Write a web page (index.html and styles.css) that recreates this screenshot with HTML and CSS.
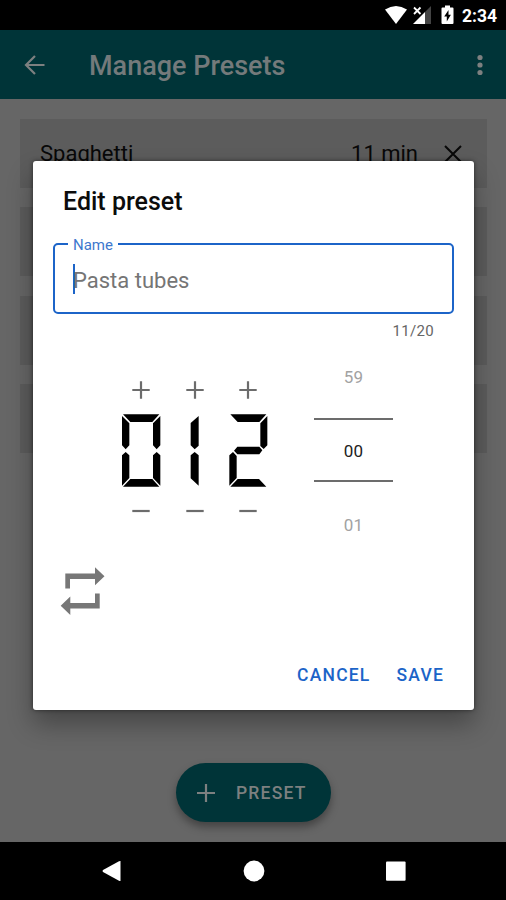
FILE: index.html
```html
<!DOCTYPE html>
<html lang="en">
<head>
<meta charset="utf-8">
<title>Manage Presets</title>
<link rel="stylesheet" href="styles.css">
</head>
<body>
<div class="phone">
  <div class="status-bar">
    <svg class="wifi" width="24" height="20" viewBox="0 0 24 20"><path d="M1 4.500Q12-2.500 23 4.500L12 19Z" fill="#fff"/></svg>
    <svg class="signal" width="19" height="20" viewBox="0 0 19 20"><path d="M18 1V19H12V7Z" fill="#444"/><path d="M12 7V19H0Z" fill="#fff"/><path d="M1 2.500L7.500 9M7.500 2.500L1 9" stroke="#fff" stroke-width="1.800"/></svg>
    <svg class="battery" width="13" height="20" viewBox="0 0 13 20"><path d="M4 .5H9V2.500H11.500Q12.500 2.500 12.500 3.500V18Q12.500 19 11.500 19H1.500Q.5 19 .5 18V3.500Q.5 2.500 1.500 2.500H4Z" fill="#fff"/><path d="M7.500 5L3.200 11.500H5.800V16.500L9.900 9.800H7.500Z" fill="#000"/></svg>
    <span class="clock">2:34</span>
  </div>
  <header class="app-bar">
    <svg class="back" width="22" height="22" viewBox="0 0 22 22"><path d="M20.500 11H2.500M11 2L2 11L11 20" fill="none" stroke="#7d8080" stroke-width="2.200"/></svg>
    <h1>Manage Presets</h1>
    <svg width="6" height="22" viewBox="0 0 6 22" fill="#7d8080"><circle cx="3" cy="3.500" r="2.600"/><circle cx="3" cy="11" r="2.600"/><circle cx="3" cy="18.500" r="2.600"/></svg>
  </header>
  <main class="content">
    <ul class="presets">
      <li><span class="preset-name">Spaghetti</span><span>11 min</span><svg width="18" height="18" viewBox="0 0 18 18"><path d="M1 1L17 17M17 1L1 17" stroke="#080808" stroke-width="2"/></svg></li>
      <li></li>
      <li></li>
      <li></li>
    </ul>
    <button class="add"><svg width="18" height="18" viewBox="0 0 18 18"><path d="M9 0V18M0 9H18" stroke="#7d8080" stroke-width="2.200"/></svg><span>PRESET</span></button>
  </main>
  <nav class="nav-bar">
    <svg width="22" height="22" viewBox="0 0 22 22"><path d="M19.500 1V21Q19 21.200 18 20.700L2 12Q1 11 2 10L18 1.300Q19 .8 19.500 1Z" fill="#fff"/></svg>
    <svg width="22" height="22" viewBox="0 0 22 22"><circle cx="11" cy="11" r="10.400" fill="#fff"/></svg>
    <svg width="22" height="22" viewBox="0 0 22 22"><rect x="1" y="1.400" width="19.600" height="19.300" rx="1" fill="#fff"/></svg>
  </nav>

  <section class="dialog">
    <h2>Edit preset</h2>
    <div class="field">
      <label>Name</label>
      <span class="caret"></span><span class="value">Pasta tubes</span>
    </div>
    <div class="counter">11/20</div>
    <div class="pickers">
      <div class="digits">
        <div class="digit">
          <svg class="sign" width="18" height="18" viewBox="0 0 18 18"><path d="M9 .3V17.700M.3 9H17.700"/></svg>
          <svg width="40" height="74" viewBox="64 159 120 222"><path d="M70 163H179L158 186H92ZM67 168L89 190V256L78 268L67 256ZM182 168L160 190V256L171 268L182 256ZM67 377V286L78 276L89 286V354ZM182 377V286L171 276L160 286V354ZM70 380L92 357H158L179 380Z"/></svg>
          <svg class="sign" width="18" height="18" viewBox="0 0 18 18"><path d="M.3 9H17.700"/></svg>
        </div>
        <div class="digit">
          <svg class="sign" width="18" height="18" viewBox="0 0 18 18"><path d="M9 .3V17.700M.3 9H17.700"/></svg>
          <svg width="40" height="74" viewBox="224 159 120 222"><path d="M295 168L271 189V256L283 268L295 257ZM283 276L295 286V377L271 355V286Z"/></svg>
          <svg class="sign" width="18" height="18" viewBox="0 0 18 18"><path d="M.3 9H17.700"/></svg>
        </div>
        <div class="digit">
          <svg class="sign" width="18" height="18" viewBox="0 0 18 18"><path d="M9 .3V17.700M.3 9H17.700"/></svg>
          <svg width="40" height="74" viewBox="384 159 120 222"><path d="M391 163H499L478 186H413ZM502 168V256L491 267L481 258V190ZM402 272L412 260H478L487 271L478 283H412ZM388 377V286L399 276L410 288V354ZM391 380L413 357H477L499 380Z"/></svg>
          <svg class="sign" width="18" height="18" viewBox="0 0 18 18"><path d="M.3 9H17.700"/></svg>
        </div>
      </div>
      <div class="wheel">
        <span class="faded">59</span>
        <span class="current">00</span>
        <span class="faded">01</span>
      </div>
    </div>
    <svg class="repeat" width="46" height="50" viewBox="0 0 46 50" fill="#777"><path d="M5.300 6.600H35V.3L44.500 9.300L35 18.300V12H10V21.600H5.300ZM39.700 26.500V41.500H10.300V48L.7 38.700L10.300 29.500V36H35V26.500Z"/></svg>
    <div class="actions"><button>CANCEL</button><button>SAVE</button></div>
  </section>
</div>
</body>
</html>
```

FILE: styles.css
```css
* { box-sizing: border-box; }
body {
  margin: 0;
  font-family: Roboto, "Noto Sans", sans-serif;
  background: #000;
}
svg { display: block; flex: none; }
h1, h2, ul { margin: 0; padding: 0; }
button { border: 0; background: none; padding: 0; font: inherit; }
.phone {
  position: relative;
  width: 506px;
  height: 900px;
  overflow: hidden;
  display: flex;
  flex-direction: column;
}
.status-bar {
  height: 30px;
  flex: none;
  background: #000;
  display: flex;
  align-items: center;
  justify-content: flex-end;
  padding-right: 9px;
}
.signal { margin-left: 5px; }
.battery { margin: 0 8px 0 9px; }
.clock { color: #fff; font-size: 17.500px; font-weight: 700; line-height: 30px; padding-top: 2px; }
.app-bar {
  height: 69px;
  flex: none;
  background: #003438;
  display: flex;
  align-items: center;
  padding: 0 23px 0 24px;
}
.app-bar h1 {
  flex: 1;
  margin-left: 43px;
  padding-top: 3px;
  font-size: 27px;
  line-height: 36px;
  font-weight: 500;
  color: #747a7b;
}
.content {
  flex: 1;
  background: #666;
  display: flex;
  flex-direction: column;
  align-items: center;
  padding: 20px 19px 20px 20px;
}
.presets {
  width: 100%;
  list-style: none;
  display: flex;
  flex-direction: column;
  gap: 19.300px;
}
.presets li {
  height: 69px;
  background: #5c5c5c;
  display: flex;
  align-items: center;
  padding: 0 25px 0 20px;
  font-size: 22px;
  color: #080808;
}
.preset-name { flex: 1; }
.presets svg { margin-left: 26px; }
.add {
  margin-top: auto;
  width: 155px;
  height: 59px;
  border-radius: 30px;
  background: #003438;
  box-shadow: 0 5px 9px rgba(0, 0, 0, .35);
  display: flex;
  align-items: center;
  padding-left: 21px;
  gap: 21px;
  color: #7d8080;
  font-size: 17.500px;
  font-weight: 500;
  letter-spacing: 1.200px;
}
.nav-bar {
  height: 58px;
  flex: none;
  background: #000;
  display: flex;
  align-items: center;
  justify-content: space-between;
  padding: 0 99px 0 101px;
}
.dialog {
  position: absolute;
  left: 33px;
  top: 161px;
  width: 441px;
  height: 549px;
  border-radius: 3px;
  background: #fff;
  box-shadow: 0 14px 26px rgba(0, 0, 0, .32), 0 0 4px rgba(0, 0, 0, .5);
  padding: 0 20px;
  display: flex;
  flex-direction: column;
}
.dialog > * { flex: none; }
.dialog h2 {
  margin: 25px 0 0 10px;
  height: 32px;
  line-height: 32px;
  font-size: 25px;
  font-weight: 500;
  color: #0c0c0c;
}
.field {
  position: relative;
  margin-top: 25px;
  height: 71px;
  border: 2px solid #1c64c8;
  border-radius: 5px;
  display: flex;
  align-items: center;
  padding-left: 18px;
}
.field label {
  position: absolute;
  left: 13px;
  top: -9px;
  padding: 0 5px;
  background: #fff;
  color: #3d78ce;
  font-size: 15px;
  line-height: 18px;
}
.caret { width: 2px; height: 30px; margin-right: -2px; background: #1c64c8; }
.value { font-size: 22px; color: #757575; padding-top: 3px; }
.counter {
  margin-top: 7px;
  height: 20px;
  line-height: 20px;
  padding-right: 20px;
  text-align: right;
  font-size: 15px;
  letter-spacing: .3px;
  color: #666;
}
.pickers { display: flex; height: 220px; margin-top: -2px; }
.digits { display: flex; gap: 13.500px; margin: 42px 0 0 68px; }
.digit { display: flex; flex-direction: column; align-items: center; gap: 14px; height: 142px; }
.digit .sign:last-child { margin-top: 1px; }
.sign { fill: none; stroke: #6c6c6c; stroke-width: 2.200; }
.wheel {
  width: 79px;
  margin-left: 46px;
  text-align: center;
  font-size: 17px;
  letter-spacing: .3px;
  display: flex;
  flex-direction: column;
}
.wheel span { flex: none; height: 84px; line-height: 86px; }
.wheel .faded:first-child { height: 80px; line-height: 79px; margin-top: -1px; }
.wheel .current {
  height: 64px;
  line-height: 62px;
  border-top: 2px solid #6c6c6c;
  border-bottom: 2px solid #6c6c6c;
  color: #222;
}
.faded { color: #a2a2a2; }
.repeat { margin: 8px 0 0 7px; }
.actions {
  display: flex;
  justify-content: flex-end;
  gap: 26px;
  margin-top: 47px;
  padding-right: 10px;
}
.actions button {
  color: #1c64c8;
  font-size: 17.500px;
  line-height: 22px;
  font-weight: 500;
  letter-spacing: 1.200px;
}
```
